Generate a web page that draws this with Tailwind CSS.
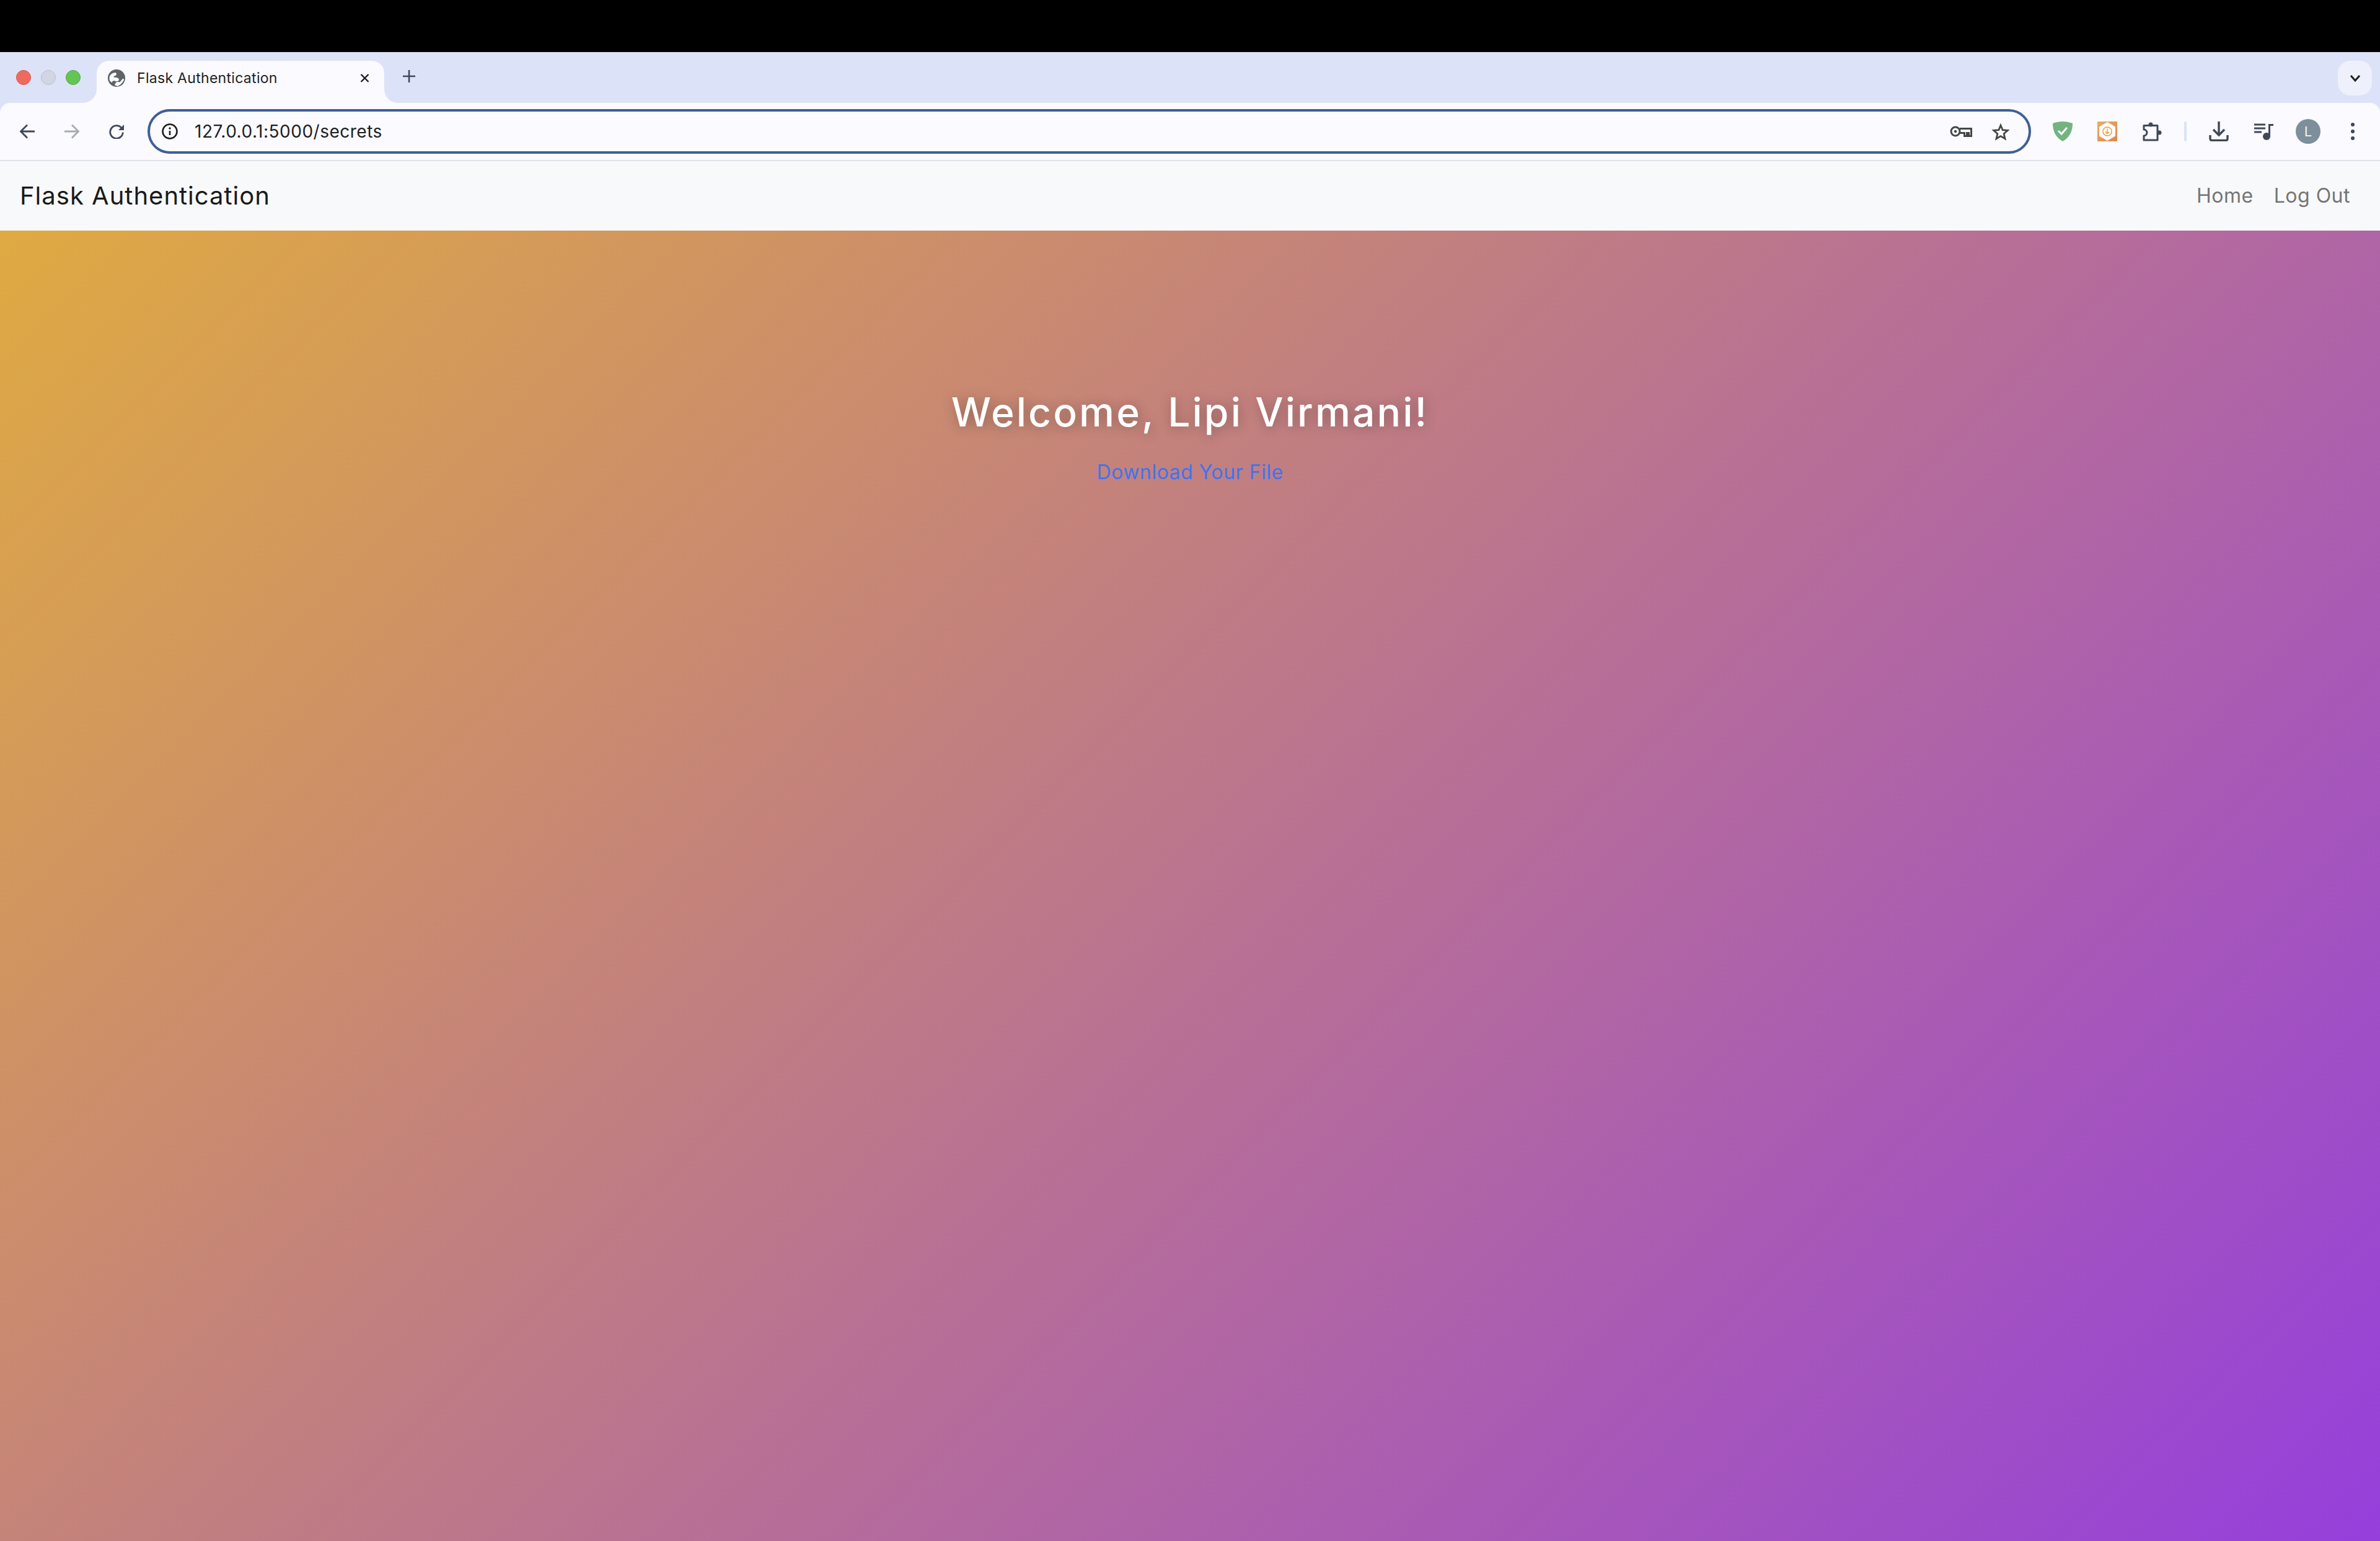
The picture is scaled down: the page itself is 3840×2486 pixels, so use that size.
<!DOCTYPE html>
<html lang="en">
<head>
  <meta charset="UTF-8" />
  <title>Flask Authentication</title>
  <script src="https://cdn.jsdelivr.net/npm/@tailwindcss/browser@4"></script>
</head>
<body class="bg-black font-['Inter',sans-serif] h-[2486px] flex flex-col overflow-hidden">

  <!-- Black bar above the browser -->
  <div class="h-[84px] shrink-0 bg-black"></div>

  <!-- Browser chrome -->
  <div class="shrink-0 bg-[#dce2f7]">
    <div class="h-[82px] flex pl-[26px] pr-[13px]">
      <div class="flex items-center gap-4">
        <span class="w-6 h-6 rounded-full bg-[#ef6a5e] border border-[#d9564b]"></span>
        <span class="w-6 h-6 rounded-full bg-[#d2d6e3] border border-[#bcbfc9]"></span>
        <span class="w-6 h-6 rounded-full bg-[#62c554] border border-[#4fae43]"></span>
      </div>
      <div class="relative self-end ml-[26px] w-[464px] h-[68px] bg-[#fafaff] rounded-t-[20px] flex items-center pl-[18px] pr-[24px] pb-[12px]">
        <svg class="absolute left-[-22px] bottom-0 w-[22px] h-[22px]" viewBox="0 0 22 22"><path d="M22 0A22 22 0 0 1 0 22H22Z" fill="#fafaff"/></svg>
        <svg class="absolute right-[-22px] bottom-0 w-[22px] h-[22px]" viewBox="0 0 22 22"><path d="M0 0A22 22 0 0 0 22 22H0Z" fill="#fafaff"/></svg>
        <svg class="w-7 h-7 shrink-0" viewBox="0 0 28 28">
          <circle cx="14" cy="14" r="14" fill="#5f6368"/>
          <path d="M2.700 17C2 13 3 10 4.500 8.500 7 6 10 5 12.700 5.300 14 6.500 14.500 8 13.500 9 12 10.500 9.500 10.500 9.300 12 10.500 13.500 14 12.500 16 13.700 18 15 18.500 16.500 17.500 18 15.500 19.500 13 19.500 11 18.500 8.500 17.500 7.500 19 6.500 21 5 20.500 3.500 19 2.700 17Z" fill="#fafaff"/>
          <path d="M11 25C12 23 12.500 21.500 14.300 20.300 16 19.500 18 21 19.300 20.300 21.500 19 22.500 16 24.300 14.700 25.500 15 26 16 26 17 24.500 20.500 21.500 24 16 27 14 26.500 12.500 26 11 25Z" fill="#fafaff"/>
        </svg>
        <span class="ml-[19px] text-[23px] text-[#1f1f1f] tracking-[0.3px] whitespace-nowrap">Flask Authentication</span>
        <svg class="ml-auto w-[15px] h-[14px]" viewBox="0 0 15 14"><path d="M1.500 1l12 12M13.500 1l-12 12" stroke="#1f1f1f" stroke-width="2.400"/></svg>
      </div>
      <svg class="self-center ml-[30px] mb-[4px] w-5 h-5" viewBox="0 0 20 20"><path d="M10 0v20M0 10h20" stroke="#3f4859" stroke-width="2.600"/></svg>
      <div class="ml-auto self-start mt-[14px] w-[55px] h-[56px] rounded-[20px] bg-[#eef1fc] flex items-center justify-center">
        <svg class="w-[18px] h-3" viewBox="0 0 18 12"><path d="M2 2l7 8 7-8" fill="none" stroke="#1f1f1f" stroke-width="3"/></svg>
      </div>
    </div>

    <div class="h-[92px] bg-[#fafaff] rounded-t-[16px] flex items-center pl-[8px] pr-[8px]">
      <div class="w-[72px] flex justify-center">
        <svg class="w-6 h-6" viewBox="0 0 24 24"><path d="M24 12H2.500M12 1.500L1.500 12 12 22.500" fill="none" stroke="#3f4859" stroke-width="2.800"/></svg>
      </div>
      <div class="w-[72px] flex justify-center">
        <svg class="w-6 h-6" viewBox="0 0 24 24"><path d="M0 12h21.500M12 1.500L22.500 12 12 22.500" fill="none" stroke="#a9abb0" stroke-width="2.800"/></svg>
      </div>
      <div class="w-[72px] flex justify-center">
        <svg class="w-6 h-6" viewBox="0 0 24 24"><path d="M20 6.500A10.300 10.300 0 1 0 22.300 13.500" fill="none" stroke="#3f4859" stroke-width="2.800"/><path d="M24 1V10H15Z" fill="#3f4859"/></svg>
      </div>

      <!-- Address bar -->
      <div class="ml-[14px] flex-1 h-[72px] border-4 border-[#3f5f96] rounded-full flex items-center pl-[19px] pr-[30px]">
        <svg class="w-[26px] h-[26px] shrink-0" viewBox="0 0 26 26"><circle cx="13" cy="13" r="11.500" fill="none" stroke="#1f1f1f" stroke-width="2.600"/><path d="M13 12v7" stroke="#1f1f1f" stroke-width="2.600"/><circle cx="13" cy="8" r="1.700" fill="#1f1f1f"/></svg>
        <span class="ml-[27px] flex-1 text-[28px] text-[#1f1f1f] tracking-[0.5px]">127.0.0.1:5000/secrets</span>
        <svg class="w-9 h-5" viewBox="0 0 36 20"><circle cx="9" cy="10" r="7" fill="none" stroke="#444746" stroke-width="3"/><circle cx="9" cy="10" r="2.200" fill="#444746"/><path d="M16 5.500h18.500v12h-4v-5h-3v5h-4v-5H16" fill="none" stroke="#444746" stroke-width="3"/></svg>
        <svg class="ml-[31px] w-[30px] h-[29px]" viewBox="0 0 32 30"><path d="M16 4l3.400 8 8.600.8-6.500 5.700 2 8.500-7.500-4.500-7.500 4.500 2-8.500-6.500-5.700 8.600-.8z" fill="none" stroke="#444746" stroke-width="3" stroke-miterlimit="10"/></svg>
      </div>

      <!-- Extensions and toolbar icons -->
      <div class="ml-[15px] w-[72px] flex justify-center">
        <svg class="w-8 h-8" viewBox="0 0 32 32"><path d="M16 0c5 0 11 1 16 3 0 13-5 23-16 29C5 26 0 16 0 3 5 1 11 0 16 0z" fill="#74b381"/><path d="M9 15l5 5 9-10" fill="none" stroke="#fff" stroke-width="3"/></svg>
      </div>
      <div class="w-[72px] flex justify-center">
        <svg class="w-8 h-8" viewBox="0 0 32 32"><defs><linearGradient id="orange" x1="0" y1="0" x2="1" y2="1"><stop offset="0" stop-color="#e9ae66"/><stop offset="1" stop-color="#e0854a"/></linearGradient></defs><rect width="32" height="32" fill="url(#orange)"/><path d="M16 1l13 7.500v15L16 31 3 23.500v-15z" fill="#fff"/><circle cx="16" cy="16" r="7" fill="none" stroke="#e99b3f" stroke-width="1.500"/><path d="M16 11.500v8M12.800 16.500l3.200 3.200 3.200-3.200" fill="none" stroke="#e99b3f" stroke-width="1.500"/></svg>
      </div>
      <div class="w-[72px] flex justify-center">
        <svg class="w-8 h-8" viewBox="0 0 32 32"><path d="M3 6.500H25V30H3V23a5 5 0 0 0 0-10Z" fill="none" stroke="#3f4859" stroke-width="3" stroke-linejoin="round"/><circle cx="14" cy="5" r="3.500" fill="#3f4859"/><circle cx="28" cy="18" r="3.500" fill="#3f4859"/></svg>
      </div>
      <div class="mx-4 w-1 h-8 rounded-full bg-[#dae2f8]"></div>
      <div class="w-[72px] flex justify-center">
        <svg class="w-8 h-8" viewBox="0 0 32 32"><path d="M16 0v21M7 13l9 9 9-9" fill="none" stroke="#3f4859" stroke-width="3.400"/><path d="M2 22v6a2.500 2.500 0 0 0 2.500 2.500h23A2.500 2.500 0 0 0 30 28v-6" fill="none" stroke="#3f4859" stroke-width="3.400"/></svg>
      </div>
      <div class="w-[72px] flex justify-center">
        <svg class="w-8 h-8" viewBox="0 0 32 32"><path d="M1 5h18M1 11h18M1 17h12" stroke="#3f4859" stroke-width="3"/><path d="M24 4h8v3h-5v17h-3z" fill="#3f4859"/><circle cx="21" cy="24" r="6" fill="#3f4859"/></svg>
      </div>
      <div class="w-[72px] flex justify-center">
        <div class="w-10 h-10 rounded-full bg-[#7c8f9b] flex items-center justify-center text-[22px] text-[#f1f4f6]">L</div>
      </div>
      <div class="w-[72px] flex flex-col items-center gap-[5px]">
        <span class="w-[6px] h-[6px] rounded-full bg-[#3f4859]"></span>
        <span class="w-[6px] h-[6px] rounded-full bg-[#3f4859]"></span>
        <span class="w-[6px] h-[6px] rounded-full bg-[#3f4859]"></span>
      </div>
    </div>
  </div>

  <!-- Navbar -->
  <nav class="h-[114px] shrink-0 bg-[#f8f9fa] border-t-2 border-[#e0e2ea] flex items-center pl-[32px] pr-[48px]">
    <a class="text-[40px] text-[#1a1a1a] tracking-[1px]">Flask Authentication</a>
    <div class="ml-auto flex gap-[33px] text-[32px] text-[#757575] tracking-[0.5px]">
      <a>Home</a>
      <a>Log Out</a>
    </div>
  </nav>

  <!-- Page body -->
  <main class="flex-1 bg-[linear-gradient(135deg,#dfaa42,#963fdc)] flex flex-col items-center pt-[245px]">
    <h1 class="text-[64px] font-medium text-white tracking-[3.200px] [text-shadow:2px_2px_20px_rgba(0,0,0,0.3)]">Welcome, Lipi Virmani!</h1>
    <a class="mt-[25px] text-[32px] text-[#3b74f5] tracking-[0.5px]">Download Your File</a>
  </main>

</body>
</html>
